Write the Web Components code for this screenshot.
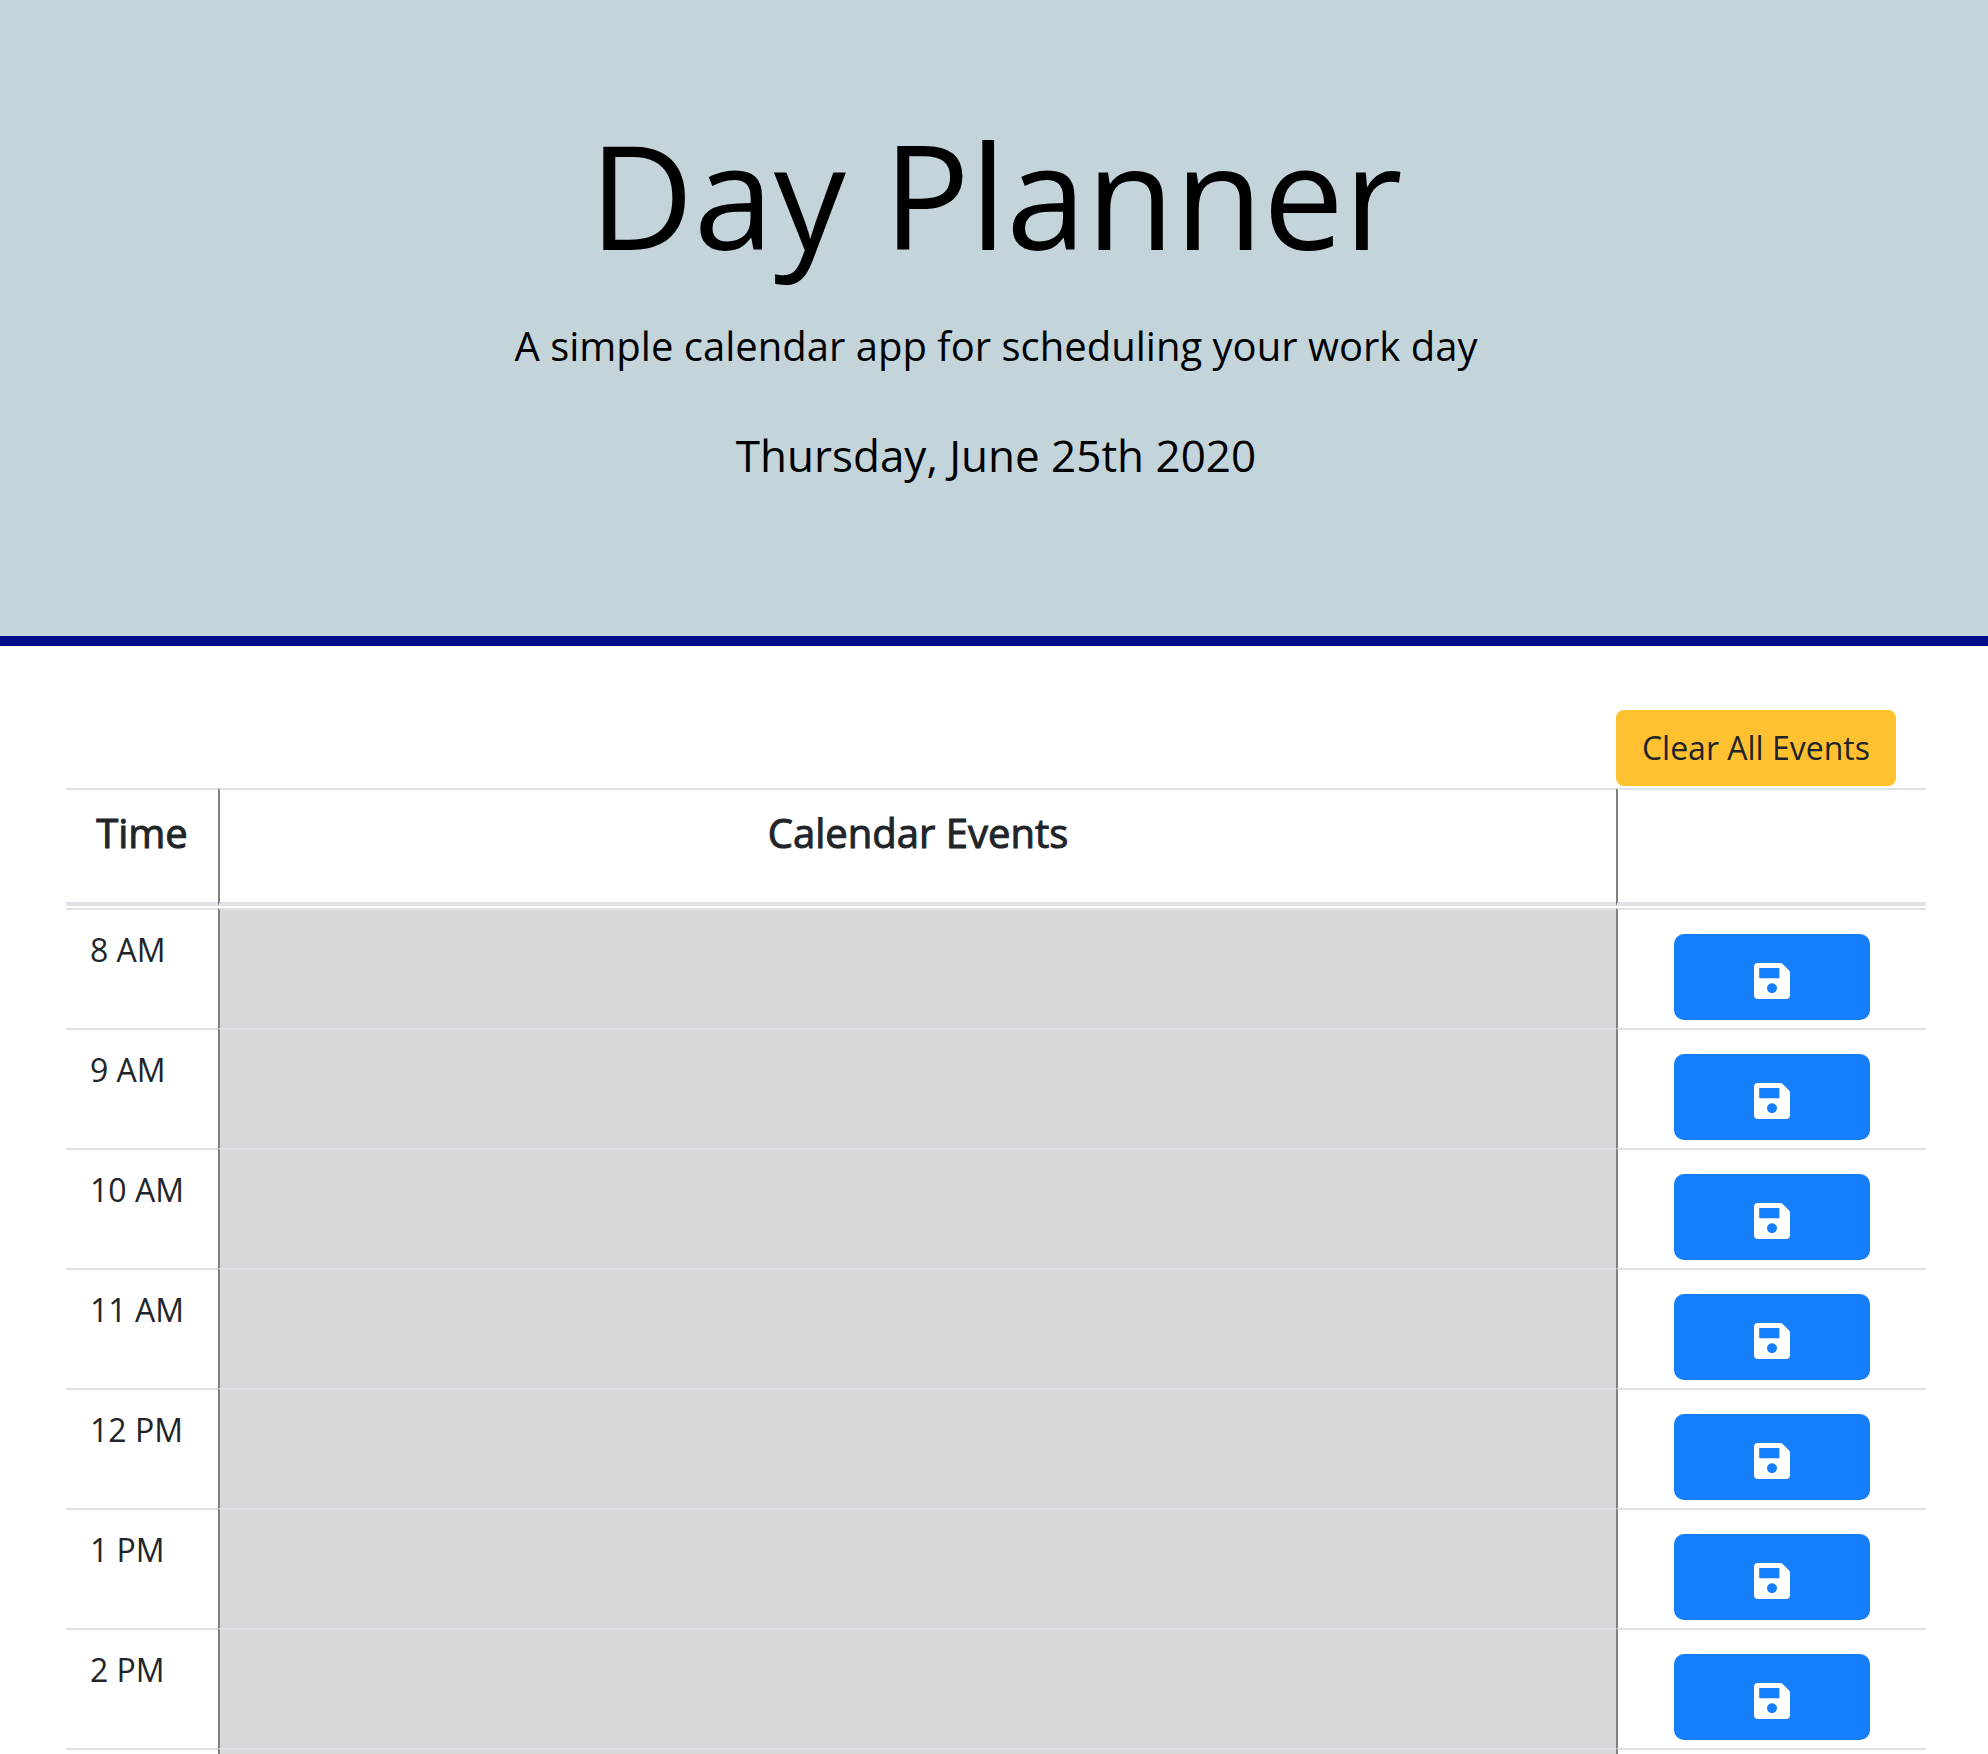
<!DOCTYPE html>
<html lang="en">
<head>
<meta charset="utf-8">
<meta name="viewport" content="width=device-width, initial-scale=1">
<title>Day Planner</title>
<style>
  body {
    margin: 0;
    background: #fff;
    color: #212529;
    font: 400 32px/48px "Open Sans", "Noto Sans", sans-serif;
  }
</style>
</head>
<body>
<planner-header>
  <span slot="title">Day Planner</span>
  <span slot="lead">A simple calendar app for scheduling your work day</span>
  <span slot="date">Thursday, June 25th 2020</span>
</planner-header>
<planner-schedule hours="8 AM,9 AM,10 AM,11 AM,12 PM,1 PM,2 PM"></planner-schedule>

<template id="header-template">
  <style>
    :host { display: block; }
    header {
      padding: 108px 62px 148px 66px;
      background: #c3d4db;
      border-bottom: 10px solid #000b87;
      color: #000;
      text-align: center;
    }
    h1, p { margin: 0; font-weight: 400; }
    h1 { font-size: 144px; line-height: 172px; }
    .lead { margin-top: 36px; font-size: 40px; line-height: 60px; }
    .date { margin-top: 46px; font-size: 44px; line-height: 66px; }
  </style>
  <header>
    <h1><slot name="title"></slot></h1>
    <p class="lead"><slot name="lead"></slot></p>
    <p class="date"><slot name="date"></slot></p>
  </header>
</template>

<template id="clear-template">
  <style>
    :host { display: block; }
    button {
      display: block;
      padding: 12px 24px;
      border: 2px solid #ffc12f;
      border-radius: 8px;
      background: #ffc12f;
      color: #212529;
      font: inherit;
      cursor: pointer;
    }
  </style>
  <button type="button"><slot></slot></button>
</template>

<template id="save-template">
  <style>
    :host { display: block; }
    button {
      display: block;
      width: 196px;
      margin: 0 auto;
      padding: 23px 0 15px;
      border: 0;
      border-radius: 10px;
      background: #157efb;
      color: #fff;
      cursor: pointer;
    }
    svg { display: block; width: 48px; height: 48px; margin: 0 auto; }
  </style>
  <button type="button">
    <svg viewBox="0 0 24 24" fill="currentColor" fill-rule="evenodd" aria-hidden="true">
      <path d="M5 3h11.200q.6 0 1 .4l3.400 3.400q.4.4.4 1V19q0 2-2 2H5q-2 0-2-2V5q0-2 2-2zM5.900 5.500q-.3 0-.3.3v4.500q0 .3.3.3h9.500q.3 0 .3-.3V5.800q0-.3-.3-.3zM12 13.100a2.500 2.500 0 1 0 0 5 2.500 2.500 0 0 0 0-5z"/>
    </svg>
  </button>
</template>

<template id="schedule-template">
  <style>
    :host { display: block; padding: 64px 62px 0 66px; }
    .actions { display: flex; justify-content: flex-end; padding: 0 30px 2px 0; }
    table { width: 100%; table-layout: fixed; border-collapse: separate; border-spacing: 0; }
    .time { width: 152px; }
    .save { width: 310px; }
    th, td {
      box-sizing: border-box;
      padding: 0;
      border-top: 2px solid #dee2e6;
      vertical-align: top;
    }
    th + td, th + th, td + td { border-left: 2px solid #808080; }
    thead th, thead td {
      height: 118px;
      padding-top: 19px;
      border-bottom: 4px solid #dee2e6;
      font-size: 40px;
      font-weight: 400;
      text-align: center;
      -webkit-text-stroke: 1px currentColor;
    }
    tbody::before { content: ""; display: block; height: 2px; }
    tbody th {
      height: 120px;
      padding: 16px 0 0 24px;
      font-weight: 400;
      text-align: left;
    }
    .event { background: #d6d8db; }
    textarea {
      box-sizing: border-box;
      display: block;
      width: 100%;
      height: 118px;
      padding: 16px 24px;
      border: 0;
      outline: 0;
      resize: none;
      background: transparent;
      color: inherit;
      font: inherit;
    }
    .slot-save { padding: 24px 0 8px; }
    tfoot td { height: 6px; }
  </style>
  <div class="actions"><clear-button>Clear All Events</clear-button></div>
  <table>
    <colgroup><col class="time"><col><col class="save"></colgroup>
    <thead>
      <tr><th scope="col">Time</th><th scope="col">Calendar Events</th><td></td></tr>
    </thead>
    <tbody></tbody>
    <tfoot>
      <tr><td></td><td class="event"></td><td></td></tr>
    </tfoot>
  </table>
</template>

<template id="row-template">
  <tr>
    <th scope="row"></th>
    <td class="event"><textarea></textarea></td>
    <td class="slot-save"><save-button></save-button></td>
  </tr>
</template>

<script>
  const clone = id => document.getElementById(id).content.cloneNode(true);
  const events = new Map();

  class PlannerHeader extends HTMLElement {
    constructor() {
      super();
      this.attachShadow({ mode: "open" }).append(clone("header-template"));
    }
  }

  class ClearButton extends HTMLElement {
    constructor() {
      super();
      this.attachShadow({ mode: "open" }).append(clone("clear-template"));
    }
  }

  class SaveButton extends HTMLElement {
    constructor() {
      super();
      this.attachShadow({ mode: "open" }).append(clone("save-template"));
    }
    connectedCallback() {
      this.shadowRoot.querySelector("button")
        .setAttribute("aria-label", "Save " + (this.getAttribute("hour") || ""));
    }
  }

  class PlannerSchedule extends HTMLElement {
    constructor() {
      super();
      this.attachShadow({ mode: "open" }).append(clone("schedule-template"));
    }
    connectedCallback() {
      const body = this.shadowRoot.querySelector("tbody");
      body.replaceChildren();
      for (const hour of this.getAttribute("hours").split(",")) {
        const row = clone("row-template");
        const area = row.querySelector("textarea");
        const save = row.querySelector("save-button");
        row.querySelector("th").textContent = hour;
        area.setAttribute("aria-label", hour + " event");
        area.value = events.get(hour) || "";
        save.setAttribute("hour", hour);
        save.addEventListener("click", () => events.set(hour, area.value));
        body.append(row);
      }
      this.shadowRoot.querySelector("clear-button").addEventListener("click", () => {
        events.clear();
        for (const area of body.querySelectorAll("textarea")) area.value = "";
      });
    }
  }

  customElements.define("planner-header", PlannerHeader);
  customElements.define("clear-button", ClearButton);
  customElements.define("save-button", SaveButton);
  customElements.define("planner-schedule", PlannerSchedule);
</script>
</body>
</html>
